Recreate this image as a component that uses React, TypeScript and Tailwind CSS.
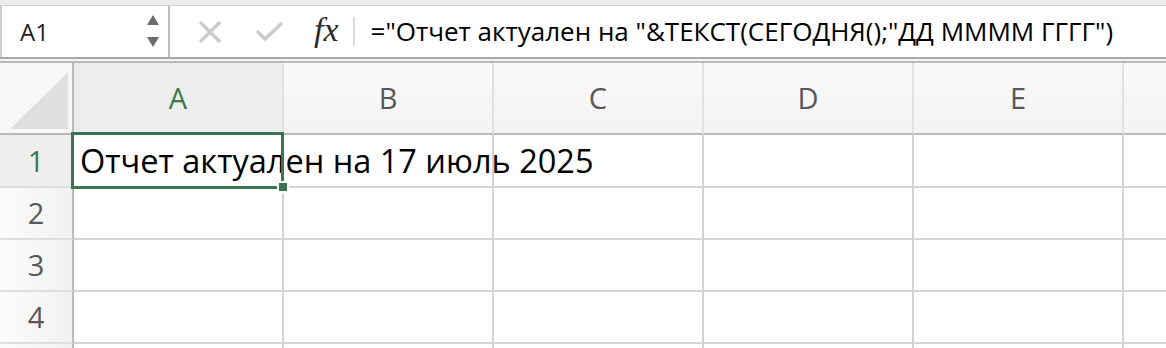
import React from 'react';

const cols = ['A', 'B', 'C', 'D', 'E', ''];
const rows = [1, 2, 3, 4, 5];

function NameBoxArrows() {
  return (
    <svg width="14" height="34" viewBox="0 0 14 34" className="mr-[8px]">
      <polygon points="7,0 13,10 1,10" fill="#6b6b6b" />
      <polygon points="1,22 13,22 7,32" fill="#6b6b6b" />
    </svg>
  );
}

function CancelIcon() {
  return (
    <svg width="24" height="22" viewBox="0 0 24 22">
      <path d="M2 1 L22 21 M22 1 L2 21" stroke="#cbcbcb" strokeWidth="3.5" fill="none" />
    </svg>
  );
}

function CheckIcon() {
  return (
    <svg width="28" height="22" viewBox="0 0 28 22">
      <path d="M1 10 L9 18 L26 2" stroke="#cbcbcb" strokeWidth="3.5" fill="none" />
    </svg>
  );
}

export default function App() {
  return (
    <div className="w-[1166px] h-[348px] overflow-hidden bg-white" style={{ fontFamily: '"Open Sans", "Noto Sans", sans-serif' }}>
      {/* Formula bar */}
      <div className="h-[63px] bg-[#ececec] pt-[5px] flex flex-col">
        <div className="flex h-[52px] border-t border-[#cfcfcf] bg-white">
          <div className="w-[170px] flex items-center justify-between border-l-2 border-[#cfcfcf] bg-white pl-[18px] border-r-2 border-r-[#bdbdbd]">
            <span className="text-[24px] text-[#1e1e1e]">A1</span>
            <NameBoxArrows />
          </div>
          <div className="flex-1 flex items-center bg-white">
            <div className="ml-[28px]"><CancelIcon /></div>
            <div className="ml-[34px]"><CheckIcon /></div>
            <span className="ml-[30px] text-[34px] italic text-[#2a2a2a] leading-none pb-[4px]" style={{ fontFamily: '"Liberation Serif", serif' }}>fx</span>
            <div className="ml-[14px] w-[2px] h-[29px] bg-[#dcdcdc]" />
            <span className="ml-[16px] text-[26px] text-black whitespace-nowrap">="Отчет актуален на "&amp;ТЕКСТ(СЕГОДНЯ();"ДД ММММ ГГГГ")</span>
          </div>
        </div>
        <div className="h-[2px] bg-[#a9a9a9]" />
        <div className="h-[2px] bg-[#f4f4f4]" />
        <div className="h-[2px] bg-[#b9b9b9]" />
      </div>

      {/* Sheet grid */}
      <div className="grid grid-cols-[74px_repeat(5,210px)_1fr] grid-rows-[72px_53px_52px_52px_52px_52px]">
        {/* corner */}
        <div className="bg-[#f8f8f8] border-r-2 border-b-2 border-[#b9b9b9] flex items-end justify-end pr-[4px] pb-[4px]">
          <svg width="58" height="57" viewBox="0 0 58 57">
            <polygon points="0,57 58,0 58,57" fill="#e0e0e0" />
          </svg>
        </div>
        {cols.map((c, i) => (
          <div
            key={c + i}
            className={
              'flex items-center justify-center border-b-2 border-b-[#b9b9b9] text-[29px] ' +
              (i < 5 ? 'border-r-2 border-r-[#e2e2e2] ' : '') +
              (c === 'A' ? 'bg-[#ededed] text-[#3b7a4f]' : 'bg-gradient-to-b from-[#fafafa] to-[#f3f3f3] text-[#585858]')
            }
          >
            {c}
          </div>
        ))}
        {rows.map((r) => (
          <React.Fragment key={r}>
            <div
              className={
                'flex items-center justify-center border-r-2 border-r-[#b9b9b9] border-b-2 border-b-[#dedede] text-[29px] ' +
                (r === 1 ? 'bg-[#eeeeee] text-[#3b7a4f]' : 'bg-gradient-to-r from-[#fcfcfc] to-[#f1f1f1] text-[#585858]')
              }
            >
              {r < 5 ? r : ''}
            </div>
            {cols.map((c, i) => (
              <div
                key={c + i}
                className={'relative border-b-2 border-b-[#d4d4d4] ' + (i < 5 ? 'border-r-2 border-r-[#d4d4d4]' : '')}
              >
                {r === 1 && c === 'A' && (
                  <>
                    <span className="absolute left-[6px] bottom-[3px] z-10 whitespace-nowrap text-[32.5px] text-black leading-none pb-[6px]">
                      Отчет актуален на 17 июль 2025
                    </span>
                    <div className="absolute left-[-3px] top-[-3px] w-[213px] h-[57px] border-[3px] border-[#3a7450] z-20" />
                    <div className="absolute left-[203px] top-[46px] w-[12px] h-[12px] bg-[#3a7450] border-2 border-white z-30" />
                  </>
                )}
              </div>
            ))}
          </React.Fragment>
        ))}
      </div>
    </div>
  );
}
